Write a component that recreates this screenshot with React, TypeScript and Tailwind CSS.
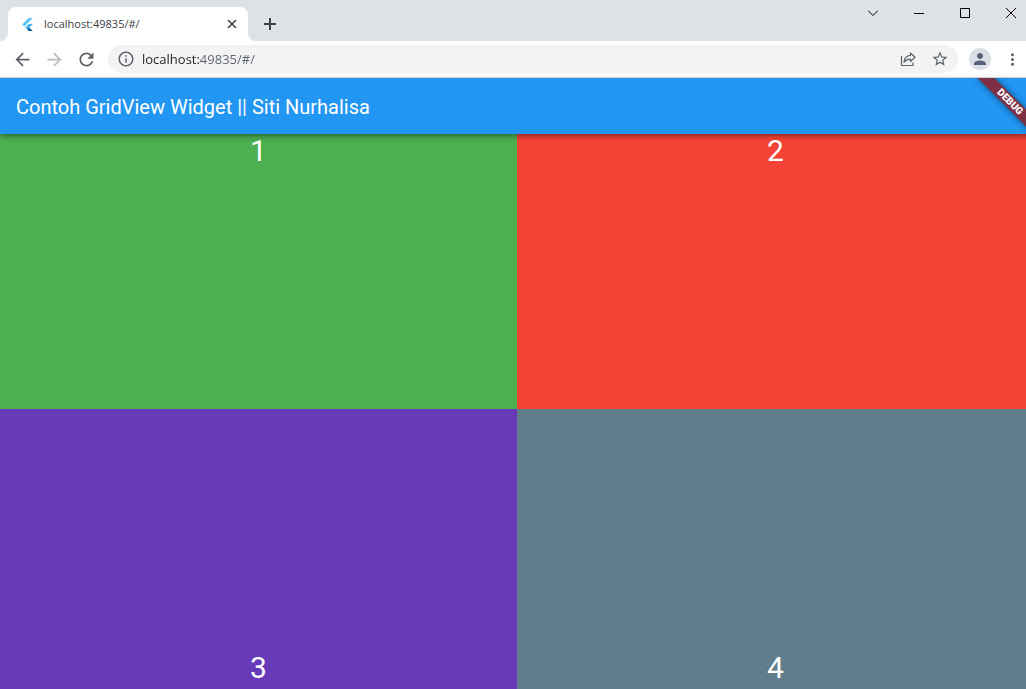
import React from "react";

const tiles = [
  { label: "1", color: "bg-[#4caf50]" },
  { label: "2", color: "bg-[#f44336]" },
  { label: "3", color: "bg-[#673ab7]" },
  { label: "4", color: "bg-[#607d8b]" },
];

function FlutterLogo() {
  return (
    <svg viewBox="0 0 24 24" className="size-[13px] shrink-0" aria-hidden="true">
      <path fill="#54c5f8" d="M14.314 0L2.3 12 6 15.7 21.684.013z" />
      <path fill="#3fb6f3" d="M14.328 11.072L7.857 17.53l3.7 3.7L21.7 11.072z" />
      <path fill="#01579b" d="M11.557 21.23L14.327 24H21.7l-6.46-6.468z" />
    </svg>
  );
}

function MaterialIcon({ d, className = "size-[21px]" }: { d: string; className?: string }) {
  return (
    <svg viewBox="0 0 24 24" fill="currentColor" className={className} aria-hidden="true">
      <path d={d} />
    </svg>
  );
}

function ToolButton({ label, className = "", children }: { label: string; className?: string; children: React.ReactNode }) {
  return (
    <button type="button" aria-label={label} className={`flex h-7 w-8 shrink-0 items-center justify-center ${className}`}>
      {children}
    </button>
  );
}

function WindowButton({ label, children }: { label: string; children: React.ReactNode }) {
  return (
    <button type="button" aria-label={label} className="flex h-[26px] w-[46px] items-center justify-center text-black">
      <svg viewBox="0 0 10 10" className="size-[10px]" fill="none" stroke="currentColor" aria-hidden="true">
        {children}
      </svg>
    </button>
  );
}

function TabStrip() {
  return (
    <div className="flex h-[41px] shrink-0 items-start bg-[#dee1e6] pl-2">
      <div className="relative mt-[7px] flex h-[34px] w-60 items-center rounded-t-lg bg-white pr-2 pl-[13px]">
        <svg viewBox="0 0 8 8" className="absolute bottom-0 -left-2 size-2" aria-hidden="true">
          <path fill="#fff" d="M8 0v8H0a8 8 0 0 0 8-8z" />
        </svg>
        <svg viewBox="0 0 8 8" className="absolute -right-2 bottom-0 size-2" aria-hidden="true">
          <path fill="#fff" d="M0 0v8h8a8 8 0 0 1-8-8z" />
        </svg>
        <FlutterLogo />
        <span className="ml-[10px] grow truncate text-[11px] leading-4 text-[#3c4043]">localhost:49835/#/</span>
        <button type="button" aria-label="Close tab" className="flex size-4 items-center justify-center text-[#3c4043]">
          <svg viewBox="0 0 10 10" className="size-[10px]" fill="none" stroke="currentColor" strokeWidth="1.6" aria-hidden="true">
            <path d="M1 1l8 8M9 1L1 9" />
          </svg>
        </button>
      </div>
      <button type="button" aria-label="New tab" className="mt-[10px] ml-2 flex size-7 items-center justify-center text-[#3c4043]">
        <svg viewBox="0 0 12 12" className="size-3" fill="none" stroke="currentColor" strokeWidth="2" aria-hidden="true">
          <path d="M6 0v12M0 6h12" />
        </svg>
      </button>
      <div className="ml-auto flex">
        <WindowButton label="Search tabs">
          <path d="M0 2.5l5 5 5-5" />
        </WindowButton>
        <WindowButton label="Minimize">
          <path d="M0 5.5h10" />
        </WindowButton>
        <WindowButton label="Maximize">
          <path d="M.5 .5h9v9h-9z" />
        </WindowButton>
        <WindowButton label="Close">
          <path d="M0 0l10 10M10 0L0 10" />
        </WindowButton>
      </div>
    </div>
  );
}

function Toolbar() {
  return (
    <div className="flex h-[37px] shrink-0 items-center border-b border-[#dadce0] bg-white px-[6px] text-[#5f6368]">
      <ToolButton label="Back">
        <MaterialIcon d="M20 11H7.83l5.59-5.59L12 4l-8 8 8 8 1.41-1.41L7.83 13H20v-2z" />
      </ToolButton>
      <ToolButton label="Forward" className="text-[#babcbe]">
        <MaterialIcon d="M12 4l-1.41 1.41L16.17 11H4v2h12.17l-5.58 5.59L12 20l8-8z" />
      </ToolButton>
      <ToolButton label="Reload">
        <MaterialIcon d="M17.65 6.35C16.2 4.9 14.21 4 12 4c-4.42 0-7.99 3.58-7.99 8s3.57 8 7.99 8c3.73 0 6.84-2.55 7.73-6h-2.08c-.82 2.33-3.04 4-5.65 4-3.31 0-6-2.69-6-6s2.69-6 6-6c1.66 0 3.14.69 4.22 1.78L13 11h7V4l-2.35 2.35z" />
      </ToolButton>
      <div className="ml-[6px] flex h-7 grow items-center rounded-full bg-[#f1f3f4] pr-[2px] pl-[9px]">
        <button type="button" aria-label="View site information" className="shrink-0">
          <MaterialIcon
            className="size-[18px]"
            d="M11 7h2v2h-2zm0 4h2v6h-2zm1-9C6.48 2 2 6.48 2 12s4.48 10 10 10 10-4.48 10-10S17.52 2 12 2zm0 18c-4.41 0-8-3.59-8-8s3.59-8 8-8 8 3.59 8 8-3.59 8-8 8z"
          />
        </button>
        <input
          type="text"
          aria-label="Address and search bar"
          defaultValue="localhost:49835/#/"
          className="ml-[7px] min-w-0 grow bg-[linear-gradient(90deg,#202124_57px,#5f6368_57px)] bg-clip-text text-[13px] leading-5 text-transparent caret-black outline-none"
        />
        <ToolButton label="Share this page">
          <svg viewBox="0 0 16 16" className="size-4" fill="none" stroke="currentColor" strokeWidth="1.2" aria-hidden="true">
            <path d="M1.5 5v9.5h11.500V11.5" />
            <path strokeLinejoin="round" d="M10.5 2l4.500 4.200-4.500 4.300V8.200C7.500 8.200 5.500 9.300 4 11.200 4.200 7.500 6.500 4.800 10.500 4.400z" />
          </svg>
        </ToolButton>
        <ToolButton label="Bookmark this tab">
          <MaterialIcon
            className="size-[18px]"
            d="M22 9.24l-7.19-.62L12 2 9.19 8.63 2 9.24l5.46 4.73L5.82 21 12 17.27 18.18 21l-1.63-7.03L22 9.24zM12 15.4l-3.76 2.27 1-4.28-3.32-2.88 4.38-.38L12 6.1l1.71 4.04 4.38.38-3.32 2.88 1 4.28L12 15.4z"
          />
        </ToolButton>
      </div>
      <ToolButton label="Profile" className="ml-[6px]">
        <span className="flex size-[22px] items-center justify-center rounded-full bg-[#dadfe6] text-[#59627a]">
          <MaterialIcon
            className="size-[18px]"
            d="M12 12c2.21 0 4-1.79 4-4s-1.79-4-4-4-4 1.79-4 4 1.79 4 4 4zm0 2c-2.67 0-8 1.34-8 4v2h16v-2c0-2.66-5.33-4-8-4z"
          />
        </span>
      </ToolButton>
      <ToolButton label="Customize and control">
        <MaterialIcon
          className="size-[19px]"
          d="M12 8c1.1 0 2-.9 2-2s-.9-2-2-2-2 .9-2 2 .9 2 2 2zm0 2c-1.1 0-2 .9-2 2s.9 2 2 2 2-.9 2-2-.9-2-2-2zm0 6c-1.1 0-2 .9-2 2s.9 2 2 2 2-.9 2-2-.9-2-2-2z"
        />
      </ToolButton>
    </div>
  );
}

function AppBar() {
  return (
    <header className="relative z-10 flex h-14 shrink-0 items-center overflow-hidden bg-[#2196f3] px-4 pt-[2px] font-['Roboto',sans-serif] shadow-[0_2px_4px_-1px_rgba(0,0,0,0.2),0_4px_5px_rgba(0,0,0,0.14),0_1px_6px_rgba(0,0,0,0.12)]">
      <h1 className="text-xl leading-6 font-normal text-white">Contoh GridView Widget || Siti Nurhalisa</h1>
      <div className="absolute top-[18px] -right-4 flex h-3 w-20 rotate-45 items-center justify-center bg-[#7c3145] text-[10px] leading-3 font-black text-white shadow-[0_0_6px_rgba(0,0,0,0.5)]">
        DEBUG
      </div>
    </header>
  );
}

export default function App() {
  return (
    <div className="h-screen overflow-hidden font-['Open_Sans','Noto_Sans',sans-serif]">
      <div className="flex h-full w-[calc(100%+8px)] flex-col">
        <TabStrip />
        <Toolbar />
        <AppBar />
        <main className="min-h-0 grow overflow-hidden">
          <div className="-mt-[242px] grid grid-cols-2 font-['Roboto',sans-serif]">
            {tiles.map((tile) => (
              <div key={tile.label} className={`flex aspect-square items-center justify-center text-[30px] leading-9 text-white ${tile.color}`}>
                {tile.label}
              </div>
            ))}
          </div>
        </main>
      </div>
    </div>
  );
}
